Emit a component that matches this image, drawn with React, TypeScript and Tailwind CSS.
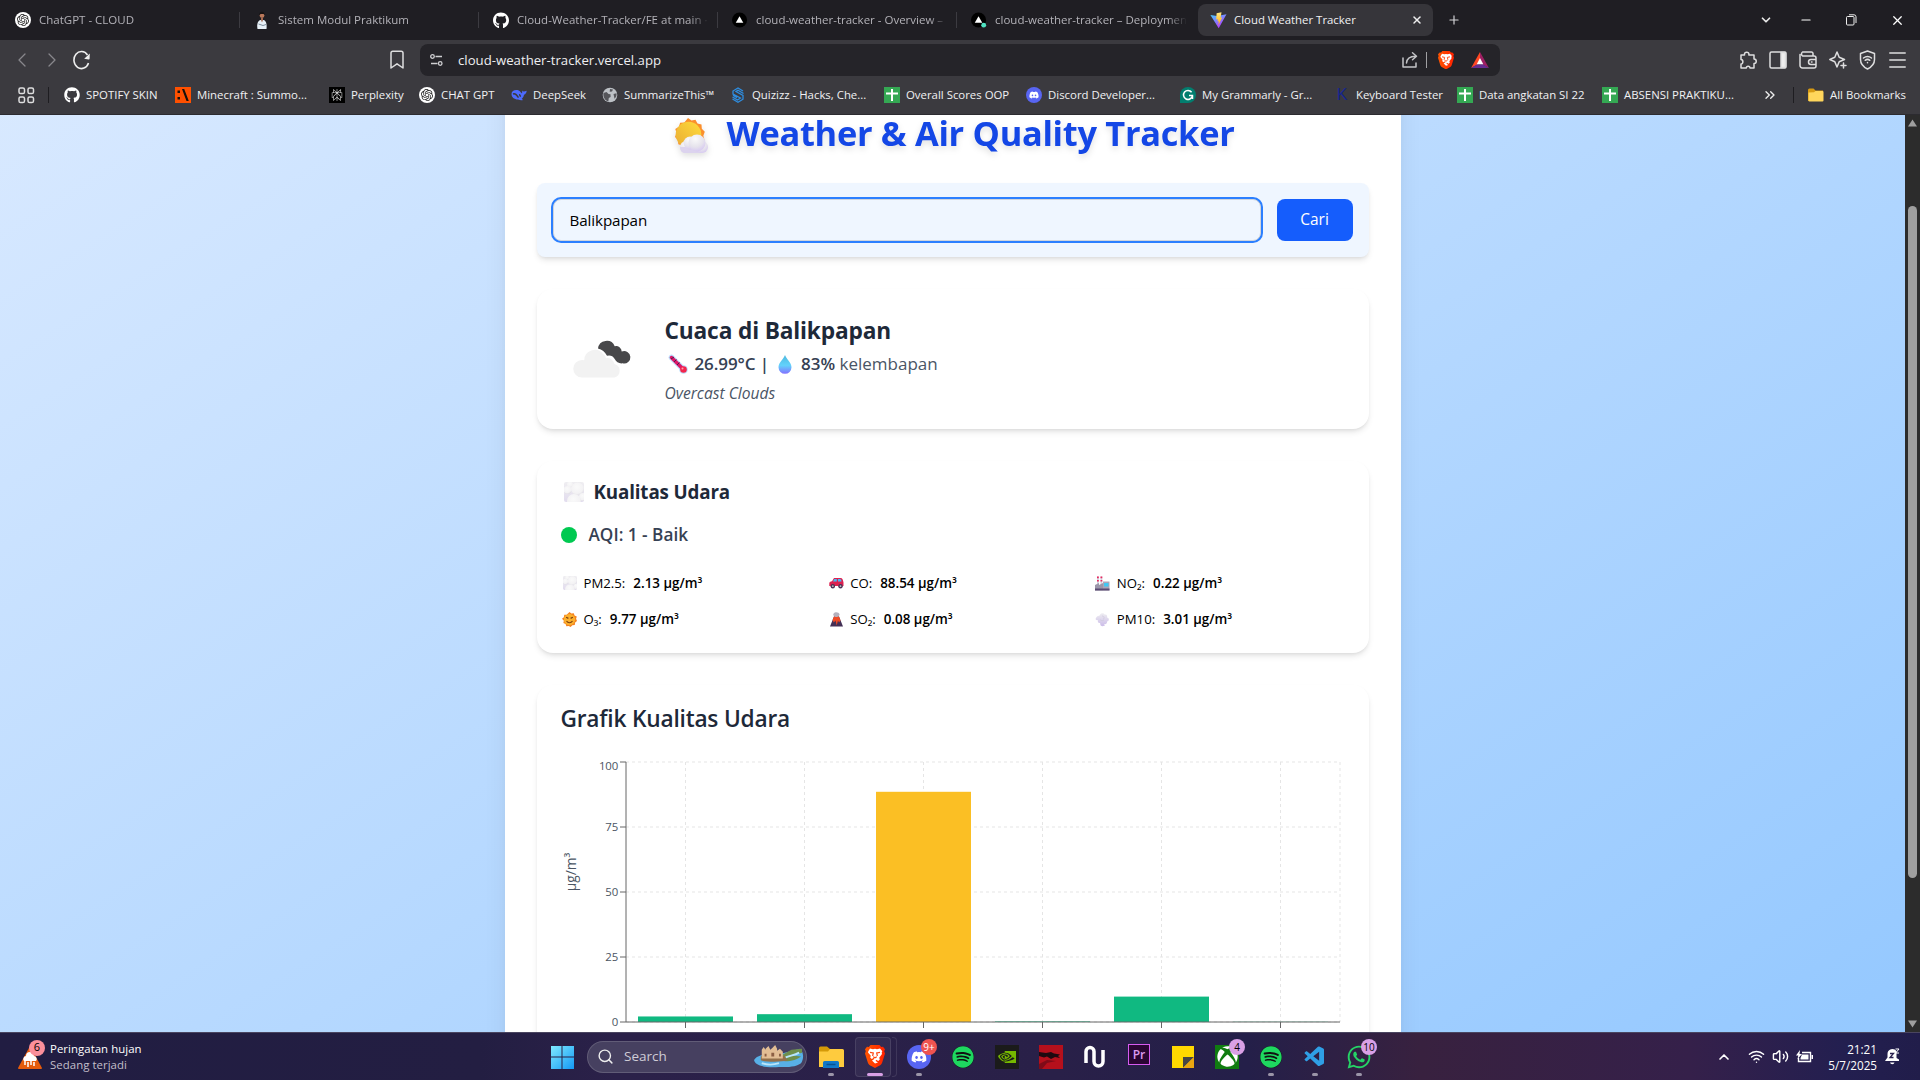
import React from "react";
import { FaGithub, FaDiscord, FaSpotify, FaWhatsapp, FaXbox } from "react-icons/fa";
import { SiOpenai, SiNvidia, SiPerplexity } from "react-icons/si";
import { VscVscode } from "react-icons/vsc";
import { X, Plus, ChevronDown, ChevronLeft, ChevronRight, ChevronUp, Minus, Search, Wifi, Volume2, ChevronsRight } from "lucide-react";

type Kids = { children?: React.ReactNode; className?: string };

/* ---------- small brand marks ---------- */
const Gpt = () => (
  <span className="flex h-4 w-4 items-center justify-center rounded-full bg-white text-[#222]"><SiOpenai size={12} /></span>
);
const Vercel = ({ live = false }: { live?: boolean }) => (
  <svg width="17" height="18" viewBox="0 0 17 18">
    <circle cx="8" cy="9" r="8" fill="#000" />
    <path d="M8 5l4 7H4z" fill="#fff" />
    {live && <circle cx="13.5" cy="14.5" r="2.6" fill="#50e3c2" />}
  </svg>
);
const Vite = () => (
  <svg width="17" height="17" viewBox="0 0 17 17">
    <defs>
      <linearGradient id="va" x1="0" y1="0" x2=".6" y2="1"><stop stopColor="#41d1ff" /><stop offset="1" stopColor="#bd34fe" /></linearGradient>
      <linearGradient id="vb" x1="0" y1="0" x2="0" y2="1"><stop stopColor="#ffea83" /><stop offset="1" stopColor="#ffa800" /></linearGradient>
    </defs>
    <path d="M.4 3l6.700.9L16.500 2.200 8.700 16.200z" fill="url(#va)" />
    <path d="M11.500.3L6.600 1.300 6.200 7.500l1.800-.3-.5 2.400 1.400-.4-.7 4.300 4-8-1.600.3z" fill="url(#vb)" />
  </svg>
);
const Person = () => (
  <svg width="16" height="18" viewBox="0 0 16 18">
    <path d="M3.500 18c-1-5 .5-8.500 3-9h3c2.500.5 3.500 4 3 9z" fill="#e8f1f8" />
    <circle cx="8" cy="4.500" r="2.400" fill="#b9785b" />
    <path d="M5.300 4.500c-.4-5 5.400-5 5.400-.5L9.500 2.900H6.600z" fill="#171313" />
    <path d="M7 7h2v2l-1 2.500L7 9z" fill="#a56a50" />
    <path d="M4.500 13l4.500 1.500 3-1" stroke="#7d8d9c" fill="none" />
  </svg>
);
const Mine = () => (
  <svg width="16" height="16" viewBox="0 0 16 16"><path fill="#ff5000" d="M0 0h16v16H0z" /><path d="M2.500 3.500h2.500v2.500H2.500zM2.500 10h2.500v2.500H2.500zM7 2h2.200l4.600 12h-2.300z" fill="#17110c" /></svg>
);
const Perp = () => <span className="flex h-4 w-4 items-center justify-center bg-black text-[#ddd]"><SiPerplexity size={12} /></span>;
const Whale = () => (
  <svg width="16" height="16" viewBox="0 0 16 16">
    <path d="M.5 7C.5 4 3.500 2.500 6.500 3c1.800.4 3.200 2 4.500 3.500.3-1 0-2.200.4-3 .6 1.200 1.400 1.300 4.300.3-.2 2.200-1.200 3.400-2.700 3.900-.3 2-1.400 3.400-2.300 4l1.300 1.300c-2 .6-3.600-.1-5-.5C3 12.500.500 10 .5 7z" fill="#4d6bfe" />
    <path d="M2 7c2-1 4 1 5.500 3.600M8 7.800c1.200 0 1.400 1.200 1.200 1.900" stroke="#3b3a3f" strokeWidth="1.400" fill="none" />
  </svg>
);
const World = () => (
  <svg width="16" height="16" viewBox="0 0 16 16"><circle cx="8" cy="8" r="7.300" fill="#bdc1c6" /><path d="M1.500 6l3-1 2 2 2 .3L8.600 10l-1.800 1-.5 3.400C3 13.500.8 10 1.500 6zM8 2l3 .4-1 2-2.300.3zM11.500 7l3-.7c.3 2-.3 4-2 5.500z" fill="#55555a" /></svg>
);
const Quiz = () => (
  <svg width="16" height="16" viewBox="0 0 16 16" fill="none" stroke="#2e8de0"><path strokeWidth="1.300" d="M13 4L8 .9 3 4v3l7.500 4-3 2L2.500 10M13.500 6.500L8 3.300l-2 1.200 7 3.900v3.800L8 15.200 2.500 12M3 8.300l4 2.300" /></svg>
);
const Sheet = () => (
  <svg width="16" height="16" viewBox="0 0 16 16"><path fill="#34a853" d="M0 0h16v16H0z" /><path d="M7 2h2v3.500h5v2H9V14H7V7.500H2v-2h5z" fill="#fff" /></svg>
);
const Disc = () => <span className="flex h-4 w-4 items-center justify-center rounded-full bg-[#5865f2] text-white"><FaDiscord size={10} /></span>;
const Gram = () => (
  <svg width="16" height="16" viewBox="0 0 16 16"><path d="M0 16V8a8 8 0 1 1 8 8z" fill="#027e6f" /><path d="M11.600 5.200A4.500 4.500 0 1 0 12.400 9M9 8.600h3.500V12" stroke="#fff" strokeWidth="1.500" fill="none" /></svg>
);
const Kay = () => <span className="flex h-4 w-4 items-center justify-center font-['Liberation_Sans'] text-[16px] text-[#15258f]">K</span>;
const Folder = () => (
  <svg width="16" height="16" viewBox="0 0 16 16"><path d="M0 3a1.500 1.500 0 0 1 1.500-1.500h4L7.500 3.500H15V14H0z" fill="#d79a13" /><path d="M.5 5.500L6 5.300 7.500 4H14.500a1 1 0 0 1 1 1v8.500a1 1 0 0 1-1 1h-13a1 1 0 0 1-1-1z" fill="#ffd65c" /></svg>
);

/* ---------- tabs ---------- */
const Tab = ({ icon, text, last = false }: { icon: React.ReactNode; text: string; last?: boolean }) => (
  <div className="relative flex h-10 w-[239px] shrink-0 items-center pl-[15px]">
    <span className="flex w-4 shrink-0 justify-center">{icon}</span>
    <span className="ml-2 w-[194px] whitespace-nowrap text-[11.5px] leading-4 text-[#b3b2b8] [mask-image:linear-gradient(90deg,#000_89%,transparent_99%)]">{text}</span>
    {!last && <span className="absolute -right-px top-3 h-4 w-px bg-[#3c3b41]" />}
  </div>
);

const Mark = ({ w, icon, text }: { w: string; icon: React.ReactNode; text: string }) => (
  <div className={"flex shrink-0 items-center gap-1.5 " + w}>
    <span className="flex h-4 w-4 shrink-0 items-center justify-center">{icon}</span>
    <span className="whitespace-nowrap text-[11.4px] leading-4 text-[#f1f1f3]">{text}</span>
  </div>
);

const BraveShield = ({ size }: { size: number }) => (
  <svg width={size} height={size * 1.15} viewBox="0 0 20 23">
    <defs><linearGradient id="br" x1="0" x2="1"><stop stopColor="#ff5500" /><stop offset="1" stopColor="#ff2000" /></linearGradient></defs>
    <path d="M5.500 0h9l1.700 2 1.800-.2 2 2.400-.8 2 .8 2.300-2.800 9c-.6 2-2 2.600-3.500 3.600L10 23l-3.700-1.900c-1.500-1-2.900-1.600-3.500-3.600L0 8.500l.8-2.300-.8-2 2-2.400 1.800.2z" fill="url(#br)" />
    <path d="M5 3.500l3 .7 2-.5 2 .5 3-.7 2.300 2.800-.6 1.200.3 1.500-2.800 3.800.6 1.700-1.500 1.500-2.300-1.300-.3 1.400 2.300 1.500L10 18.500l-3-2.900 2.300-1.500-.3-1.400L6.700 14l-1.500-1.500.6-1.700L3 7.500l.3-1.200z" fill="#fff" />
    <path d="M5 7.300l3.300.7-.7 3M15 7.300l-3.300.7.7 3M8.200 11.700l1.800 1 1.800-1" stroke="#ff4612" strokeWidth="1.200" fill="none" />
  </svg>
);

const line = { fill: "none", stroke: "#dededf", strokeWidth: 1.5, strokeLinecap: "round", strokeLinejoin: "round" } as const;

function Browser() {
  return (
    <header className="h-[115px] shrink-0 border-b border-[#2c2b30] bg-[#3b3a3f]">
      <div className="flex h-10 items-center bg-[#1f1e23]">
        <div className="flex w-[1198px] shrink-0">
          <Tab icon={<Gpt />} text="ChatGPT - CLOUD" />
          <Tab icon={<Person />} text="Sistem Modul Praktikum" />
          <Tab icon={<FaGithub size={17} color="#fff" />} text="Cloud-Weather-Tracker/FE at main ·" />
          <Tab icon={<Vercel />} text="cloud-weather-tracker - Overview –" />
          <Tab icon={<Vercel live />} text="cloud-weather-tracker – Deploymen" last />
        </div>
        <div className="flex h-8 w-[235px] shrink-0 items-center rounded-lg bg-[#36353a] pl-[12px]">
          <Vite />
          <span className="ml-[7px] text-[11.4px] leading-4 text-[#f1f1f3]">Cloud Weather Tracker</span>
          <X size={12} strokeWidth={3} color="#eee" className="ml-auto mr-[10px]" />
        </div>
        <Plus size={14} color="#d5d5d8" className="ml-[14px]" />
        <div className="ml-auto flex items-center pr-[15px]">
          <ChevronDown size={14} strokeWidth={3} color="#e8e8e8" />
          <Minus size={14} color="#fff" className="ml-[26px]" />
          <svg width="12" height="12" viewBox="0 0 12 12" fill="none" stroke="#eee" className="ml-[33px]"><rect x=".5" y="2.500" width="7.500" height="8.500" rx="1" /><path d="M3 .8h5a2 2 0 0 1 2 2V9" /></svg>
          <X size={15} color="#fff" className="ml-[32px]" />
        </div>
      </div>

      <div className="flex h-10 items-center">
        <div className="flex w-[420px] shrink-0 items-center">
          <ChevronLeft size={24} strokeWidth={1.300} color="#88878c" className="ml-[10px]" />
          <ChevronRight size={24} strokeWidth={1.300} color="#88878c" className="ml-[6px]" />
          <svg width="18" height="20" viewBox="0 0 18 20" className="ml-[9px]"><path d="M14.500 5A7.500 8.500 0 1 0 15.500 13" fill="none" stroke="#eee" strokeWidth="1.600" /><path d="M16.800 3.500l-.2 5.200a.8.800 0 0 1-.9.800l-4.500-.8z" fill="#eee" /></svg>
          <svg width="14" height="20" viewBox="0 0 14 20" className="ml-[299px]" {...line}><path d="M1 3a1.800 1.800 0 0 1 1.800-1.800h8.400A1.800 1.800 0 0 1 13 3v15l-6-4.200L1 18z" /></svg>
        </div>
        <div className="flex h-8 w-[1080px] shrink-0 items-center rounded-lg bg-[#252429] pl-[10px] pr-[11px]">
          <svg width="13" height="14" viewBox="0 0 13 14" fill="none" stroke="#cfcfd2" strokeWidth="1.300"><circle cx="2.500" cy="3.500" r="1.800" /><path d="M5.500 3.500H12M1 10.500h6.500" /><circle cx="10.200" cy="10.500" r="1.800" /></svg>
          <span className="ml-[15px] text-[13.2px] leading-5 text-[#eeeef0]">cloud-weather-tracker.vercel.app</span>
          <svg width="17" height="18" viewBox="0 0 17 18" className="ml-auto" {...line} stroke="#c4c4c7"><path d="M1 7v9h13v-4M4.500 12c.3-4.500 3-6.800 9-6.800M10.500 1.800L14.500 5.200l-4 3.500" /></svg>
          <span className="ml-[7px] h-4 w-px bg-[#a0a0a3]" />
          <span className="ml-[11px]"><BraveShield size={16} /></span>
          <svg width="18" height="16" viewBox="0 0 19 17" className="ml-[17px]"><path d="M9.500 0L0 17l9.500-5z" fill="#ff4724" /><path d="M9.500 0L19 17l-9.500-5z" fill="#9e1f63" /><path d="M0 17h19l-6.500-4h-6z" fill="#662d91" /><path d="M9.500 6.500L13 13H6z" fill="#fff" /></svg>
        </div>
        <div className="ml-auto flex items-center gap-3 pr-[14px]">
          <svg width="18" height="19" viewBox="0 0 18 19" {...line}><path d="M2 4h3.500c-.6-3.800 5-3.800 4.400 0H15v4c3 0 3 4.500 0 4.500V17h-4c0-2.500-3.700-2.500-3.700 0H2v-4c2.500.2 2.500-4.500 0-4.500z" /></svg>
          <svg width="18" height="18" viewBox="0 0 18 18" {...line}><rect x="1" y="1" width="16" height="16" rx="1.500" /><path d="M12 1.500h4.500v15H12z" fill="#eee" /></svg>
          <svg width="18" height="18" viewBox="0 0 18 18" {...line}><path d="M14 4V2.500A1.500 1.500 0 0 0 12.500 1h-9a2.500 2.500 0 0 0 0 4H15a2 2 0 0 1 2 2v8a2 2 0 0 1-2 2H3.500A2.500 2.500 0 0 1 1 14.500V3.500M17 8.500h-5a2.500 2.500 0 0 0 0 5h5M12.500 11h.5" /></svg>
          <svg width="18" height="18" viewBox="0 0 18 18" {...line}><path d="M8 1l2.200 5.300 5.300 2.200-5.300 2.200L8 16l-2.200-5.300L.8 8.500l5-2.200zM14.500 12v5M12 14.500h5" /></svg>
          <svg width="17" height="20" viewBox="0 0 17 20" {...line}><path d="M8.500 1l7 2.500v6c0 4.500-3 7.500-7 9.500-4-2-7-5-7-9.500v-6zM4.500 8c2.500-2 5.500-2 8 0M6.200 10.300c1.500-1.200 3.100-1.200 4.600 0M8.500 12.500v.3" /></svg>
          <svg width="17" height="16" viewBox="0 0 17 16" {...line} className="ml-[1px]"><path d="M.8 1h15.400M.8 8h15.400M.8 15h15.400" /></svg>
        </div>
      </div>

      <div className="flex h-[30px] items-center pl-[18px]">
        <svg width="17" height="17" viewBox="0 0 17 17" {...line}><rect x="1" y="1" width="5.500" height="5.500" rx="1.600" /><rect x="10" y="1" width="5.500" height="5.500" rx="1.600" /><rect x="1" y="10" width="5.500" height="5.500" rx="1.600" /><rect x="10" y="10" width="5.500" height="5.500" rx="1.600" /></svg>
        <span className="ml-[13px] mr-[15px] h-4 w-px bg-[#1e1d21]" />
        <Mark w="w-[111px]" icon={<FaGithub size={16} color="#fff" />} text="SPOTIFY SKIN" />
        <Mark w="w-[154px]" icon={<Mine />} text="Minecraft : Summo..." />
        <Mark w="w-[90px]" icon={<Perp />} text="Perplexity" />
        <Mark w="w-[92px]" icon={<Gpt />} text="CHAT GPT" />
        <Mark w="w-[91px]" icon={<Whale />} text="DeepSeek" />
        <Mark w="w-[128px]" icon={<World />} text="SummarizeThis™" />
        <Mark w="w-[154px]" icon={<Quiz />} text="Quizizz - Hacks, Che..." />
        <Mark w="w-[142px]" icon={<Sheet />} text="Overall Scores OOP" />
        <Mark w="w-[154px]" icon={<Disc />} text="Discord Developer..." />
        <Mark w="w-[154px]" icon={<Gram />} text="My Grammarly - Gr..." />
        <Mark w="w-[123px]" icon={<Kay />} text="Keyboard Tester" />
        <Mark w="w-[145px]" icon={<Sheet />} text="Data angkatan SI 22" />
        <Mark w="w-[160px]" icon={<Sheet />} text="ABSENSI PRAKTIKU..." />
        <ChevronsRight size={16} color="#eee" />
        <span className="ml-[15px] mr-[14px] h-4 w-px bg-[#1e1d21]" />
        <Mark w="w-[105px]" icon={<Folder />} text="All Bookmarks" />
      </div>
    </header>
  );
}

/* ---------- emoji-style drawings ---------- */
const SunCloud = () => (
  <svg width="38" height="36" viewBox="0 0 38 36">
    <defs>
      <linearGradient id="sn" x1="1" y1="0" x2="0" y2="1"><stop stopColor="#ffdb3a" /><stop offset="1" stopColor="#e9ac35" /></linearGradient>
      <radialGradient id="cl" cx=".4" cy=".25" r=".8"><stop stopColor="#fafafa" /><stop offset=".6" stopColor="#e6e3ec" /><stop offset="1" stopColor="#d5c6f2" /></radialGradient>
    </defs>
    <path d="M17 0l3.500 2.600 4-.8 2 3.600 4 1.200.3 4.200 3 3-1.500 4 1.200 4-3.600 2.200-1.200 4-4.200.3-3 3-4-1.500-4 1.200-2.200-3.600-4-1.200-.3-4.200-3-3 1.500-4-1.200-4 3.600-2.200 1.200-4 4.200-.3z" fill="#fb8f2c" />
    <circle cx="17.500" cy="16.500" r="12.800" fill="url(#sn)" />
    <circle cx="15" cy="29" r="6" fill="url(#cl)" />
    <path d="M13 35q-4-1-4-6h22v6z" fill="#dcd3ee" />
    <circle cx="31" cy="29" r="6" fill="url(#cl)" />
    <circle cx="19" cy="25" r="6.500" fill="url(#cl)" />
    <circle cx="26" cy="25" r="8.500" fill="url(#cl)" />
  </svg>
);
const Fog = ({ size }: { size: number }) => (
  <svg width={size} height={size} viewBox="0 0 20 20">
    <defs>
      <linearGradient id="fb" x1="0" y1="0" x2="0" y2="1"><stop stopColor="#efeef1" /><stop offset="1" stopColor="#e2dcee" /></linearGradient>
      <radialGradient id="fg" cx=".45" cy=".35" r=".65"><stop stopColor="#fafafa" /><stop offset=".75" stopColor="#f3f2f4" /><stop offset="1" stopColor="#e1dfe5" /></radialGradient>
      <clipPath id="fc"><rect width="20" height="20" rx="2" /></clipPath>
    </defs>
    <g clipPath="url(#fc)">
      <rect width="20" height="20" fill="url(#fb)" />
      <circle cx="6" cy="2.500" r="3" fill="url(#fg)" />
      <circle cx="3.500" cy="8" r="4" fill="url(#fg)" />
      <circle cx="13.500" cy="7" r="6.500" fill="url(#fg)" />
      <circle cx="19" cy="15" r="4" fill="url(#fg)" />
      <circle cx="10" cy="19" r="7" fill="url(#fg)" />
    </g>
  </svg>
);
const Thermo = () => (
  <svg width="20" height="20" viewBox="0 0 20 20"><path d="M3.500 3.500L14 14" stroke="#b9dcfb" strokeWidth="5.500" strokeLinecap="round" /><circle cx="15.500" cy="15.500" r="4.300" fill="#b9dcfb" /><path d="M3.500 3.500L14.500 14.500" stroke="#dd1768" strokeWidth="3.500" strokeLinecap="round" /><circle cx="15.500" cy="15.500" r="3.300" fill="#f3254d" /><path d="M3 5l3-2M6 8l2.500-2.500M9 11l2.500-2.500" stroke="#4a2151" strokeWidth="1" /><circle cx="14.500" cy="14.500" r="1" fill="#ff9fb0" /></svg>
);
const Drop = () => (
  <svg width="14" height="19" viewBox="0 0 14 19"><defs><linearGradient id="dp" x1="0" y1="0" x2="0" y2="1"><stop stopColor="#4fb9df" /><stop offset=".55" stopColor="#62d2fb" /><stop offset="1" stopColor="#8370ff" /></linearGradient></defs><path d="M7 0c1 3.500 6.500 7.500 6.500 12.300a6.500 6.500 0 0 1-13 0C.5 7.500 6 3.500 7 0z" fill="url(#dp)" /></svg>
);
const Car = () => (
  <svg width="15" height="12" viewBox="0 0 15 12"><path d="M5 1h6.500c2 0 2.500 2 3 4.500v3.500H.3V6.500C.3 5 1.300 4.500 3 4.200z" fill="#dd2050" /><path d="M5.300 2h2.500v2.500H4zM9 2h2c1 0 1.300 1 1.600 2.500H9z" fill="#45b8f5" /><circle cx="3.800" cy="9.200" r="2.200" fill="#4b3057" /><circle cx="11.500" cy="9.200" r="2.200" fill="#4b3057" /><circle cx="3.800" cy="9.200" r=".9" fill="#bbb" /><circle cx="11.500" cy="9.200" r=".9" fill="#bbb" /></svg>
);
const Factory = () => (
  <svg width="15" height="15" viewBox="0 0 15 15"><path d="M2 .5h1.800v9H2zM5.500.5h1.800v9H5.500z" fill="#d5d0df" /><path d="M2 .5h1.800v1.800H2zM5.500.5h1.800v1.800H5.500zM2 4h1.800v1.500H2zM5.500 4h1.800v1.500H5.500z" fill="#e8295e" /><path d="M0 9l4-2v2l4-2v7.500H0z" fill="#9c97aa" /><path d="M8 5.500h6.500v9H8z" fill="#aaa5b8" /><path d="M9 7h4.500v3.500H9z" fill="#41c7f3" /><path d="M0 12.500h14.500v2H0z" fill="#5b4a72" /></svg>
);
const SunFace = () => (
  <svg width="15" height="15" viewBox="0 0 20 20"><path d="M10 0l2.500 2 3.200-.5 1 3 3 1.500-.9 3L20 12l-2.500 2-.5 3.200-3.200.3L11.500 20 9 18.500l-3.200.5-1-3-3-1.500.7-3L0 9l2.500-2 .5-3.200 3.200-.3z" fill="#f5821f" /><circle cx="10" cy="10" r="7.500" fill="#fbb02d" /><path d="M5.500 7l3 1.500M14.500 7l-3 1.500M6 12c2 3 6 3 8 0" stroke="#7a3d10" strokeWidth="1.500" fill="none" /></svg>
);
const Volcano = () => (
  <svg width="15" height="15" viewBox="0 0 15 15"><path d="M5 4.500L1 14.500h13L10 4.500z" fill="#443056" /><path d="M5 4.500h5l1.500 4-1.500 2-1-2-1.300 5L6.500 8.500 4.800 10.500 3.600 8z" fill="#f04a25" /><path d="M4.500 3.500C3.500 1.500 6 0 7.500.300S11.500 1.500 10.300 3.500L8 5H6.500z" fill="#b5b1bd" /></svg>
);
const Puff = () => (
  <svg width="15" height="15" viewBox="0 0 15 15"><defs><linearGradient id="pf" x1="0" y1="0" x2="0" y2="1"><stop stopColor="#eeedf1" /><stop offset="1" stopColor="#cbbce8" /></linearGradient></defs><path d="M1 6c1-2.500 3-1.500 3.500-2.500C6 .5 9 1 9.500 2.500c2.500-.5 3 1.500 2.500 3 2.500.5 2.500 3.500 0 4 .5 2-1.500 3-3 2.500l1 1.500-2.500.8C5 14 5.500 12 5 11c-2 .3-2.500-1.500-2-2.800C1 8.500 0 7 1 6z" fill="url(#pf)" /><path d="M7 4c2 0 3 2 1 3.500M5 7.500c1 1.500 3 1.500 4 .5" stroke="#cfc9dd" strokeWidth=".8" fill="none" /></svg>
);
const Overcast = () => (
  <svg width="80" height="80" viewBox="0 0 80 80" className="shrink-0">
    <path d="M37 29.500a8.700 8.700 0 0 1 16.700-2.200 5.500 5.500 0 0 1 7 5.300 6.200 6.200 0 1 1 1 11.700c-3.500.6-6.500-1.500-8-4.300a7 7 0 0 0-7.700-3.200Q43 31 37 29.500z" fill="#48484a" />
    <path d="M21 58.500A8.700 8.700 0 0 1 21 41q1 0 2.200.2A10.500 10.500 0 0 1 42 35q2.500 1.500 3 4.300 5.800-1.200 8.500 5.700A7 7 0 0 1 53.500 58.500z" fill="#f2f2f2" />
  </svg>
);

/* ---------- cards ---------- */
const Gas = ({ icon, name, value }: { icon: React.ReactNode; name: string; value: string }) => (
  <div className="flex h-5 items-center text-[13.2px] leading-5 text-black">
    <span className="flex w-[18px] shrink-0 items-center justify-center">{icon}</span>
    <span className="ml-[5px]">{name}:</span>
    <span className="ml-2 text-[13.4px] font-semibold">{value}</span>
  </div>
);

const bars = [2.13, 3.01, 88.54, 0.22, 9.77, 0.08];
const ticks = [0, 25, 50, 75, 100];

const Chart = () => (
  <svg width="784" height="300" viewBox="561 757 784 300" className="block overflow-visible" fontFamily="'Open Sans', 'Noto Sans', sans-serif">
    {ticks.map((t) => (
      <g key={t}>
        <line x1="626" x2="1340" y1={1022 - t * 2.6} y2={1022 - t * 2.6} stroke="#ccc" strokeWidth="1" strokeDasharray="3 3" opacity=".5" />
        <line x1="620" x2="626" y1={1022 - t * 2.6} y2={1022 - t * 2.6} stroke="#666" />
        <text x="618" y={(t === 100 ? 1030 : 1026) - t * 2.6} fontSize="11.400" letterSpacing="-.2" fill="#4b5563" textAnchor="end">{t}</text>
      </g>
    ))}
    {bars.map((v, i) => (
      <g key={i}>
        <line x1={685.5 + i * 119} x2={685.5 + i * 119} y1="762" y2="1022" stroke="#e5e5e5" strokeDasharray="3 3" />
        <rect x={638 + i * 119} width="95" y={1022 - v * 2.6} height={v * 2.6} fill={v > 50 ? "#fbbf24" : "#10b981"} />
        <line x1={685.5 + i * 119} x2={685.5 + i * 119} y1="1022" y2="1028" stroke="#666" />
      </g>
    ))}
    <line x1="1340" x2="1340" y1="762" y2="1022" stroke="#ccc" strokeDasharray="3 3" opacity=".5" />
    <line x1="626" x2="626" y1="762" y2="1022" stroke="#666" />
    <line x1="626" x2="1340" y1="1022" y2="1022" stroke="#666" />
    <text transform="translate(576 872) rotate(-90)" fontSize="13.800" fill="#4b5563" textAnchor="middle">µg/m³</text>
  </svg>
);

const Card = ({ children, className = "" }: Kids) => (
  <section className={"rounded-2xl bg-white px-6 shadow-md " + className}>{children}</section>
);

function Page() {
  return (
    <main className="flex min-h-0 flex-1 bg-[#2c2c2c]">
      <div className="h-full w-[1905px] overflow-hidden">
        <div className="-mt-[100px] flex h-[1203px] justify-center bg-linear-to-br from-blue-100 to-blue-300">
          <div className="w-[896px] bg-white px-8 pt-[100px] shadow-xl">
            <h1 className="flex h-[68px] items-start justify-center whitespace-nowrap text-[34.400px] font-bold leading-[36px] tracking-[-0.3px] text-[#1447e6] drop-shadow-md">
              <span className="mr-[18px] mt-[3px]"><SunCloud /></span>
              <span>Weather &amp; Air Quality Tracker</span>
            </h1>
            <div className="flex h-[74px] gap-4 rounded-lg bg-blue-50 p-4 shadow-md">
              <div className="flex h-[42px] flex-1 items-center rounded-lg border border-gray-300 bg-[#eff6ff] px-4 text-[15.200px] leading-6 tracking-[-0.1px] text-black ring-2 ring-[#2b7fff]">Balikpapan</div>
              <button className="h-[42px] w-[76px] rounded-lg bg-[#155dfc] text-[15.500px] font-medium text-white">Cari</button>
            </div>
            <Card className="mt-8 flex h-[140px] items-center gap-6">
              <Overcast />
              <div className="flex flex-col pt-[2px]">
                <h2 className="text-[22.700px] font-bold leading-8 tracking-[-0.15px] text-gray-800">Cuaca di Balikpapan</h2>
                <p className="mt-[3px] flex h-7 items-center text-[17px] font-[560] leading-7 text-gray-700">
                  <span className="ml-[3px] mr-[7px]"><Thermo /></span><span className="tracking-[-0.1px]">26.99°C |</span>
                  <span className="ml-[9px] mr-[9px]"><Drop /></span><span>83% <span className="font-normal text-gray-600">kelembapan</span></span>
                </p>
                <p className="mt-[3px] text-[15.600px] italic leading-6 text-gray-600">Overcast Clouds</p>
              </div>
            </Card>
            <Card className="mt-8 h-[192px] pt-[17px]">
              <h3 className="flex h-7 items-center text-[18.800px] font-bold leading-7 tracking-[-0.15px] text-gray-800"><span className="ml-[3px] mr-[10px]"><Fog size={20} /></span>Kualitas Udara</h3>
              <div className="mt-[15px] flex h-7 items-center text-[17.200px] font-[560] leading-7 text-gray-700"><span className="mr-3 h-4 w-4 rounded-full bg-[#00c951]" />AQI: 1 - Baik</div>
              <div className="mt-[24px] grid grid-cols-3 gap-4">
                <Gas icon={<Fog size={14} />} name="PM2.5" value="2.13 µg/m³" />
                <Gas icon={<Car />} name="CO" value="88.54 µg/m³" />
                <Gas icon={<Factory />} name="NO₂" value="0.22 µg/m³" />
                <Gas icon={<SunFace />} name="O₃" value="9.77 µg/m³" />
                <Gas icon={<Volcano />} name="SO₂" value="0.08 µg/m³" />
                <Gas icon={<Puff />} name="PM10" value="3.01 µg/m³" />
              </div>
            </Card>
            <Card className="mt-8 h-[460px] pt-[18px]">
              <h3 className="mb-[22px] text-[22.700px] font-semibold leading-8 tracking-[-0.2px] text-gray-800">Grafik Kualitas Udara</h3>
              <Chart />
            </Card>
          </div>
        </div>
      </div>
      <div className="flex w-[15px] flex-col items-center bg-[#2c2c2c] py-1">
        <svg width="9" height="8" viewBox="0 0 9 8"><path d="M4.500.5L9 7.500H0z" fill="#9f9f9f" /></svg>
        <div className="mt-[79px] h-[672px] w-[9px] rounded-full bg-[#9f9f9f]" />
        <svg width="9" height="8" viewBox="0 0 9 8" className="mt-auto"><path d="M4.500 7.500L9 .5H0z" fill="#9f9f9f" /></svg>
      </div>
    </main>
  );
}

/* ---------- taskbar ---------- */
const Pinned = ({ children, badge, tone = "bg-[#d9a0e6] text-black", dot, active }: { children: React.ReactNode; badge?: string; tone?: string; dot?: boolean; active?: boolean }) => (
  <div className={"relative flex h-10 w-11 shrink-0 items-center justify-center " + (active ? "before:absolute before:left-[2px] before:top-0 before:h-10 before:w-[36px] before:rounded before:border before:border-white/10 before:bg-white/5 after:absolute after:right-0 after:top-0 after:h-10 after:w-[5px] after:rounded-r after:border after:border-l-0 after:border-white/10" : "")}>
    <span className="relative flex">{children}</span>
    {badge && <span className={"absolute left-[24px] top-[2px] flex h-4 min-w-4 items-center justify-center rounded-full px-[2px] text-[10px] leading-4 " + tone}>{badge}</span>}
    {dot && <span className="absolute bottom-[1px] left-[19px] h-[3px] w-[6px] rounded-full bg-[#9b95a8]" />}
    {active && <span className="absolute bottom-[1px] left-[14px] h-[3px] w-4 rounded-full bg-[#d9a0e6]" />}
  </div>
);

const Castle = () => (
  <svg width="50" height="23" viewBox="0 0 52 24">
    <path d="M0 16C2 10 14 9 28 9l20-5c4 4 4 11 1 15-6 4-12 4-23 4C9 24 1 21 0 16z" fill="#58b0e6" />
    <path d="M30 10l9-5 11-1v4l-10 3 9 1c-4 3-9 5-17 5z" fill="#6f8f4c" />
    <path d="M7 12c4-3 21-3 25 0l3 4c-6 2-22 2-28 0z" fill="#93704b" />
    <path d="M8 12V5l2-3 2 3V4l3-3 2 4 2-2 3-3 2 4v2l3-2 3 3v7H8z" fill="#e2bd94" />
    <path d="M11 12V9h2v3zM18 12V8h3v4zM26 12V9h2v3z" fill="#8c5f43" />
    <path d="M33 13c4-2 9-2 14-5M8 19c6 2 12 2 18 0" stroke="#b9e5fa" strokeWidth="2" fill="none" />
  </svg>
);

function Taskbar() {
  return (
    <footer className="flex h-12 shrink-0 items-center border-t border-[#4a4560] bg-[linear-gradient(90deg,#211d42_0%,#231e42_25%,#2b2149_32%,#292048_55%,#241f49_65%,#38213f_74%,#35204a_88%,#231f50_96%,#211d4a_100%)] text-white">
      <div className="flex w-[540px] shrink-0 items-center pl-[18px]">
        <span className="relative block h-[30px] w-[26px]">
          <svg width="24" height="30" viewBox="0 0 24 30"><path d="M12 4L0 26q0 1 1 1h22q1 0 1-1z" fill="#e55b0b" /><path d="M6 19a3 3 0 0 1 2-5 4 4 0 0 1 8 0 3 3 0 0 1 2 5z" fill="#fff" /><path d="M7 19v4M10 20v5M13 19v4M16 20v4" stroke="#fff" strokeWidth="1.500" /></svg>
          <span className="absolute -top-[2px] left-[11px] flex h-4 w-4 items-center justify-center rounded-full bg-[#fb8f9b] text-[11px] text-black">6</span>
        </span>
        <span className="ml-[6px] flex flex-col text-[11.400px] leading-4 tracking-[0.05px]"><span>Peringatan hujan</span><span className="text-[#c2bfca]">Sedang terjadi</span></span>
      </div>
      <svg width="24" height="24" viewBox="0 0 24 24" className="ml-[10px]"><defs><linearGradient id="wn" x1="0" y1="0" x2="1" y2="1"><stop stopColor="#7feaff" /><stop offset="1" stopColor="#1499f5" /></linearGradient></defs><path d="M1 1h10.500v10.500H1zM12.500 1H24v10.500H12.500zM1 12.500h10.500V24H1zM12.500 12.500H24V24H12.500z" fill="url(#wn)" /></svg>
      <div className="ml-[13px] flex h-8 w-[220px] shrink-0 items-center rounded-full border border-white/15 bg-[#464060] pl-[9px] pr-[2px]">
        <Search size={17} color="#eee" />
        <span className="ml-[10px] text-[13.500px] text-[#cfccd6]">Search</span>
        <span className="ml-auto"><Castle /></span>
      </div>
      <div className="ml-[2px] flex">
        <Pinned dot><svg width="25" height="22" viewBox="0 0 25 22"><path d="M0 2a1.500 1.500 0 0 1 1.500-1.500H8L11 3v5H0z" fill="#d59a08" /><path d="M0 5.500h9L11 3h12.500A1.500 1.500 0 0 1 25 4.500V21H0z" fill="#fecb3e" /><path d="M4 22v-5.500A1.500 1.500 0 0 1 5.500 15h13a1.500 1.500 0 0 1 1.500 1.500V22z" fill="#1278c8" /><path d="M7.500 18.500h9" stroke="#0a5390" strokeWidth="1.500" /></svg></Pinned>
        <Pinned active><BraveShield size={20} /></Pinned>
        <Pinned dot badge="9+" tone="bg-[#ef5350] text-white"><span className="flex h-6 w-6 items-center justify-center rounded-full bg-[#5865f2]"><FaDiscord size={16} /></span></Pinned>
        <Pinned><span className="rounded-full bg-[#111]"><FaSpotify size={22} color="#1ed760" /></span></Pinned>
        <Pinned><span className="flex h-6 w-6 items-center justify-center bg-[#1b1b1b] text-[#76b900]"><SiNvidia size={18} /></span></Pinned>
        <Pinned><svg width="24" height="24" viewBox="0 0 24 24"><path d="M0 0h24v24H0z" fill="#b5101c" /><path d="M0 7l7 1 5-1 3 1.500 6 1-2 1.500 2 2-5-1-4 2-4-2.500-3 1L0 11z" fill="#1d0a10" /><path d="M0 19l8-4 9 1-9 2-5 6H0z" fill="#7f0b18" /></svg></Pinned>
        <Pinned><svg width="22" height="24" viewBox="0 0 22 24"><path d="M2 18V6.500a4 4 0 0 1 8 0v10a4.500 4.500 0 0 0 9 0V5" fill="none" stroke="#fff" strokeWidth="3.500" /></svg></Pinned>
        <Pinned><span className="-mt-1 flex h-[21px] w-[22px] items-center justify-center border-[1.500px] border-[#d65bf0] bg-[#2a0634] text-[12px] font-semibold leading-none text-[#dc9bf0]">Pr</span></Pinned>
        <Pinned><svg width="22" height="22" viewBox="0 0 22 22"><path d="M0 0h22v22H0z" fill="#ffd800" /><path d="M11 22V11h11z" fill="#474644" /><path d="M11 22l11-11v11z" fill="#eaa610" /></svg></Pinned>
        <Pinned badge="4"><span className="flex h-6 w-6 items-center justify-center bg-[#107c10]"><FaXbox size={21} /></span></Pinned>
        <Pinned dot><span className="rounded-full bg-[#111]"><FaSpotify size={22} color="#1ed760" /></span></Pinned>
        <Pinned dot><VscVscode size={24} color="#2f9fe6" /></Pinned>
        <Pinned dot badge="10"><FaWhatsapp size={26} color="#25d366" /></Pinned>
      </div>
      <div className="ml-auto flex items-center pr-[20px]">
        <ChevronUp size={16} color="#fff" strokeWidth={2.500} />
        <Wifi size={17} className="ml-[16px]" />
        <Volume2 size={17} className="ml-[7px]" />
        <svg width="17" height="14" viewBox="0 0 17 14" className="ml-[7px]"><path d="M6 2.500h8.500v9h-12V8" stroke="#fff" fill="none" strokeWidth="1.400" /><path d="M6 4.500h6.500v5H4.500V8zM15.500 5H17v4h-1.500zM4 0L0 5.500h2.300L1.500 9 6 4H3.500z" fill="#fff" /></svg>
        <span className="ml-[14px] flex w-[50px] flex-col text-right text-[11.700px] leading-4"><span>21:21</span><span className="self-end whitespace-nowrap">5/7/2025</span></span>
        <svg width="15" height="17" viewBox="0 0 15 17" className="ml-[8px]"><path d="M1 11.500l1.500-2V6a5 5 0 0 1 9-3v7l2.500 1.500V13H0z" fill="#fff" /><path d="M5 14.500h4.500a2.300 2.300 0 0 1-4.500 0z" fill="#fff" /><path d="M5 5.500h3.500L5 9.500h3.500" stroke="#2a2150" strokeWidth="1.300" fill="none" /><path d="M10.500 1h3.500l-3.300 4H14" stroke="#fff" fill="none" /></svg>
      </div>
    </footer>
  );
}

export default function App() {
  return (
    <div className="flex h-[1080px] w-[1920px] flex-col overflow-hidden font-['Open_Sans','Noto_Sans',sans-serif]">
      <Browser />
      <Page />
      <Taskbar />
    </div>
  );
}
